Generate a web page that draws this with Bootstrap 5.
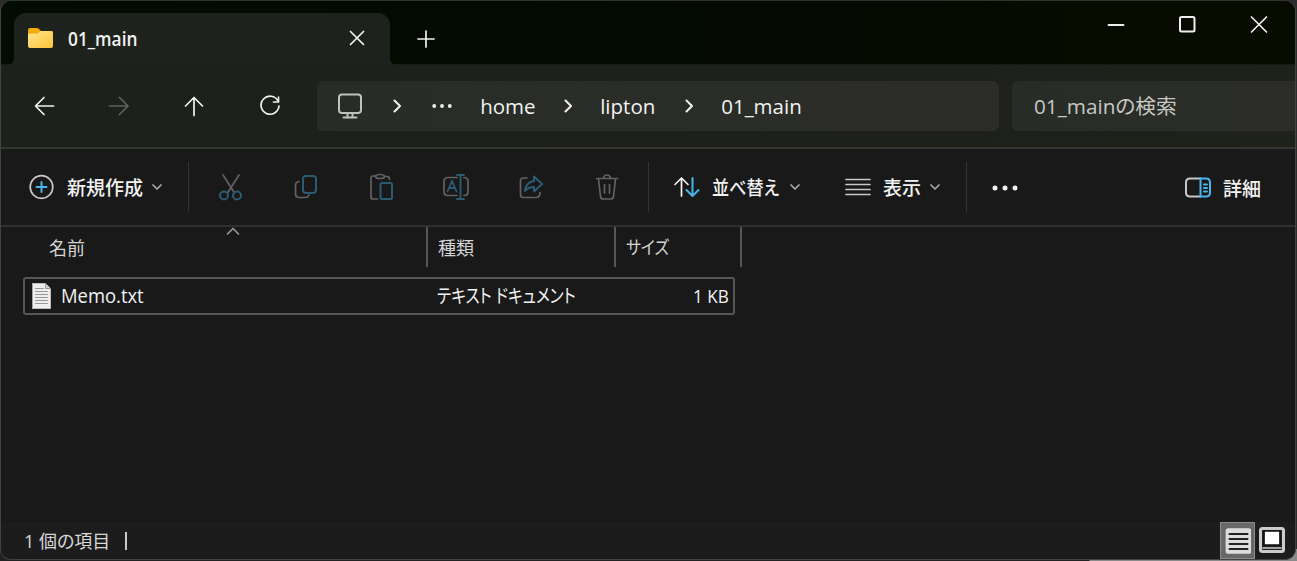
<!DOCTYPE html>
<html lang="ja" data-bs-theme="dark">
<head>
<meta charset="utf-8">
<title>01_main</title>
<link href="https://cdn.jsdelivr.net/npm/bootstrap@5.3.0/dist/css/bootstrap.min.css" rel="stylesheet">
<style>
html,body{height:100%}
body{background:linear-gradient(90deg,#222 0 1089px,#8a8a8a 1090px) bottom/100% 12px no-repeat,#2b2b2b;overflow:hidden;font:19px/1 "Open Sans","Noto Sans CJK JP",sans-serif;color:#f2f2f2}
svg{display:block;fill:none;stroke:currentColor;stroke-width:1.7;stroke-linecap:round;stroke-linejoin:round;flex:none}
.win{width:1296px;height:560px;border:1px solid #414341;border-top-color:#30332f;border-radius:11px;background:#191919;overflow:hidden;white-space:nowrap}
.titlebar{height:63px;background:linear-gradient(90deg,#020c02,#040b00 50%,#080b00)}
.filetab{width:376px;height:52px;margin:12px 0 0 13px;background:#1e221c;border-radius:12px 12px 0 0;padding:0 25px 2px 13px}
.filetab::before,.filetab::after{content:"";position:absolute;bottom:0;width:6px;height:6px}
.filetab::before{left:-6px;background:radial-gradient(circle at 0 0,transparent 5.5px,#1e221c 6px)}
.filetab::after{right:-6px;background:radial-gradient(circle at 100% 0,transparent 5.5px,#1e221c 6px)}
.caption-btns{padding:11px 24px 0 0;gap:48px;color:#eee}
.navrow{height:85px;background:linear-gradient(90deg,#1c211b,#1f211b);border-top:1px solid #141c13;border-bottom:2px solid #343634;padding-left:5px;font-size:20.5px}
.navcell{width:75.3px;display:grid;place-items:center;flex:none}
.address,.search{height:50px;background:linear-gradient(90deg,#282c27,#2c2d28);border-radius:6px;flex:none}
.address{width:682px;margin-left:10px;display:grid;grid-template-columns:65px 30px 60px 75px 42px 79px 42px 1fr;align-items:center}
.search{width:300px;margin-left:13px;padding-left:22px;color:#c6c8c5}
.cmd{height:78px;border-bottom:2px solid #303030;font-family:"Noto Sans CJK JP",sans-serif;font-weight:500}
.sep{width:1px;height:50px;background:#343434;flex:none}
.toolcell{width:75.2px;display:grid;place-items:center;color:#626262}
.b{stroke:#2c5a73}.blue{stroke:#49b5eb}
.tx{display:inline-block;transform-origin:0 50%;line-height:28px}
.cols{display:grid;grid-template-columns:427px 188px 126px 1fr;height:40px;color:#d4d4d4;font-family:"Noto Sans CJK JP",sans-serif;font-size:18px}
.cols>div{border-right:2px solid #565656;position:relative}
.cols>div:last-child{border:0}
.filerow{width:712px;height:38px;margin:10px 0 0 22px;border:2px solid #565656;border-radius:3px;display:grid;grid-template-columns:36px 376px 1fr 62px;align-items:center}
.status{height:37px;background:#1c1c1c;color:#d8d8d8;font-size:18px}
.viewsel{width:35px;height:37px;background:#686868;border:1px solid #8b8b8b;display:grid;place-items:center}
.k{font-feature-settings:"palt"}
#t-tab{transform:translateY(1px) scaleX(.91)}
#t-sort{transform:scaleX(.9)}
#t-search{transform:scaleX(1.01)}
#c3{transform:scaleX(.88)}
#r1{transform:scaleX(.945);font-size:19.5px}
#r2{transform:scaleX(.825)}
#r3{transform:scaleX(.9)}
</style>
</head>
<body>
<main class="win d-flex flex-column">
<header class="titlebar d-flex">
 <div class="filetab position-relative d-flex align-items-center">
  <svg width="27" height="24" viewBox="0 0 27 24" style="stroke:none"><defs><linearGradient id="fg" x2="1" y2="1"><stop stop-color="#ffe394"/><stop offset="1" stop-color="#ffc533"/></linearGradient></defs><path d="M1 4Q1 2 3 2h7q1 0 2 1l2 2h10q2 0 2 2v8H1z" fill="#f5ab05"/><path d="M1 9q0-1.500 1.500-1.500h8L13.500 5H24.500Q26 5 26 7v13q0 2-2 2H3q-2 0-2-2z" fill="url(#fg)"/></svg>
  <span class="tx fw-semibold" id="t-tab" style="margin-left:14px">01_main</span>
  <svg class="ms-auto" width="16" height="16" viewBox="0 0 16 16"><path d="M1.500 1.500l13 13M14.500 1.500l-13 13"/></svg>
 </div>
 <svg width="18" height="18" viewBox="0 0 18 18" style="margin:29px 0 0 27px"><path d="M9 1v16M1 9h16"/></svg>
 <div class="caption-btns ms-auto d-flex">
  <svg width="24" height="24" viewBox="0 0 24 24"><path d="M5.500 13h15" stroke-width="2"/></svg>
  <svg width="24" height="24" viewBox="0 0 24 24"><rect x="5" y="5" width="14.500" height="14.500" rx="1.500" stroke-width="2"/></svg>
  <svg width="24" height="24" viewBox="0 0 24 24"><path d="M4.500 5l15 15M19.500 5l-15 15"/></svg>
 </div>
</header>
<nav class="navrow d-flex align-items-center">
 <div class="navcell"><svg width="22" height="22" viewBox="0 0 22 22"><path d="M20.500 11H3M11 2.500L2.500 11l8.500 8.500"/></svg></div>
 <div class="navcell" style="color:#5d615c"><svg width="22" height="22" viewBox="0 0 22 22"><path d="M1.500 11H20M11.500 2.500L20 11l-8.500 8.500"/></svg></div>
 <div class="navcell"><svg width="22" height="22" viewBox="0 0 22 22"><path d="M11 20.500V2.500M2.500 11L11 2.500l8.500 8.500"/></svg></div>
 <div class="navcell"><svg width="22" height="22" viewBox="0 0 22 22"><path d="M19 6A9 9 0 1 0 20 11M19.500 2v5h-5"/></svg></div>
 <div class="address">
  <svg class="mx-auto" width="26" height="26" viewBox="0 0 26 26" style="color:#bfc2be"><rect x="2" y="1.500" width="22" height="18.500" rx="3" stroke-width="2"/><path d="M10.500 21v3M15.500 21v3M6.500 24.500h13" stroke-width="2"/></svg>
  <svg class="mx-auto" width="8" height="14" viewBox="0 0 8 14"><path d="M1.500 1.500L7 7l-5.500 5.500" stroke-width="2"/></svg>
  <svg class="mx-auto" width="20" height="5" viewBox="0 0 20 5" style="fill:currentColor;stroke:none"><circle cx="2.200" cy="2" r="1.900"/><circle cx="10" cy="2" r="1.900"/><circle cx="17.800" cy="2" r="1.900"/></svg>
  <span><span class="tx" id="t-home" style="margin-left:8px">home</span></span>
  <svg class="mx-auto" width="8" height="14" viewBox="0 0 8 14"><path d="M1.500 1.500L7 7l-5.500 5.500" stroke-width="2"/></svg>
  <span><span class="tx" id="t-lip" style="margin-left:11px">lipton</span></span>
  <svg class="mx-auto" width="8" height="14" viewBox="0 0 8 14"><path d="M1.500 1.500L7 7l-5.500 5.500" stroke-width="2"/></svg>
  <span><span class="tx" id="t-main" style="margin-left:11px">01_main</span></span>
 </div>
 <div class="search d-flex align-items-center"><span class="tx k" id="t-search">01_mainの検索</span></div>
</nav>
<section class="cmd d-flex align-items-center">
 <div class="d-flex align-items-center" style="width:187px;padding-left:27px">
  <svg width="26" height="26" viewBox="0 0 26 26"><circle cx="13.500" cy="13" r="11.300" stroke="#c8c8c8"/><path class="blue" d="M13.500 8v10M8.500 13h10" stroke-width="2"/></svg>
  <span class="tx" id="t-new" style="margin-left:13px">新規作成</span>
  <svg width="10" height="7" viewBox="0 0 10 7" style="margin-left:9px;color:#aaa"><path d="M1 1l4 4 4-4"/></svg>
 </div>
 <div class="sep"></div>
 <div class="d-flex" style="width:459px;padding-left:4px">
  <div class="toolcell"><svg width="26" height="28" viewBox="0 0 26 28"><path d="M5 2l11.500 18M21 2L9.500 20"/><circle class="b" cx="6" cy="22.500" r="4" stroke-width="2"/><circle class="b" cx="19" cy="22.500" r="4" stroke-width="2"/></svg></div>
  <div class="toolcell"><svg width="26" height="26" viewBox="0 0 26 26"><path d="M6 7.500Q2.500 8 2.500 11v8.500q0 4 4 4h6q2.500 0 3.500-2.500"/><rect class="b" x="10" y="2" width="13" height="17" rx="3" stroke-width="2"/></svg></div>
  <div class="toolcell"><svg width="26" height="28" viewBox="0 0 26 28"><path d="M9.500 26H5q-2 0-2-2V5q0-2 2-2h2.500M16.500 3.500h3q2 0 2 3"/><ellipse cx="12" cy="3.500" rx="4.500" ry="2"/><rect class="b" x="12.500" y="10" width="11.500" height="16" rx="1.500" stroke-width="2"/></svg></div>
  <div class="toolcell"><svg width="28" height="28" viewBox="0 0 28 28"><path d="M15 4.500H6Q2 4.500 2 8.500v10q0 4 4 4h9M22 4.500q4 0 4 4v10q0 4-4 4"/><path class="b" d="M5.500 18.500L10 8l4.500 10.500M7 15h6M18.500 2v24M15 2h7M15 26h7" stroke-width="1.900"/></svg></div>
  <div class="toolcell"><svg width="26" height="26" viewBox="0 0 26 26"><path d="M9 4H5.500Q2.500 4 2.500 7v13.500q0 3 3 3H18q4 0 4-5"/><path class="b" d="M16 2.500l8 7.500-8 7.500V13q-6 0-9 4 1-9 9-10z" stroke-width="2"/></svg></div>
  <div class="toolcell"><svg width="26" height="28" viewBox="0 0 26 28"><path d="M2.500 5.500h21M9.500 5Q10 2 13 2t3.500 3M4.500 6l2 17.500Q7 26 9 26h8q2 0 2.500-2.500l2-17.500M10.500 11.500v8.500M15.500 11.500v8.500"/></svg></div>
 </div>
 <div class="sep"></div>
 <div class="d-flex align-items-center" style="width:317px;padding-left:24px">
  <svg width="28" height="24" viewBox="0 0 28 24"><path d="M8.500 21V3M2 9.500L8.500 3l6.500 6.500"/><path class="blue" d="M19.500 3v18M13.500 15l6 6 6-6" stroke-width="2"/></svg>
  <span style="width:71px;margin-left:11px"><span class="tx k" id="t-sort">並べ替え</span></span>
  <svg width="10" height="7" viewBox="0 0 10 7" style="margin-left:7px;color:#aaa"><path d="M1 1l4 4 4-4"/></svg>
  <svg width="26" height="20" viewBox="0 0 26 20" style="margin-left:45px;color:#c8c8c8"><path d="M1 2.500h24M1 7.500h24M1 12.500h24M1 17.500h24"/></svg>
  <span class="tx" id="t-view" style="margin-left:12px">表示</span>
  <svg width="10" height="7" viewBox="0 0 10 7" style="margin-left:9px;color:#aaa"><path d="M1 1l4 4 4-4"/></svg>
 </div>
 <div class="sep"></div>
 <svg width="28" height="8" viewBox="0 0 28 8" style="margin:2px 0 0 24px;fill:currentColor;stroke:none"><circle cx="4" cy="4" r="2.500"/><circle cx="14" cy="4" r="2.500"/><circle cx="24" cy="4" r="2.500"/></svg>
 <svg class="ms-auto" width="26" height="21" viewBox="0 0 26 21"><path d="M15.500 1.500H5Q1 1.500 1 5.500v10q0 4 4 4h10.500" stroke="#c8c8c8" stroke-width="2"/><path class="blue" d="M15.500 1.500H21q4 0 4 4v10q0 4-4 4h-5.500zM19 7.500h3M19 11h3M19 14.500h3" stroke-width="2"/></svg>
 <span class="tx" id="t-det" style="margin:1px 34px 0 12px">詳細</span>
</section>
<section class="flex-grow-1">
 <div class="cols">
  <div style="padding:6px 0 0 48px"><span class="tx" id="c1">名前</span><svg class="position-absolute" width="14" height="9" viewBox="0 0 14 9" style="left:225px;top:0;color:#999"><path d="M1.500 7L7 1.500 12.500 7"/></svg></div>
  <div style="padding:6px 0 0 10px"><span class="tx" id="c2">種類</span></div>
  <div style="padding:5px 0 0 10px"><span class="tx k" id="c3">サイズ</span></div><div></div>
 </div>
 <div class="filerow">
  <svg width="20" height="26" viewBox="0 0 20 26" style="margin-left:7px;stroke-width:1"><path d="M.500.500h13l5 5v20H.500z" fill="#eee" stroke="#bbb"/><path d="M13.500.500v5h5" fill="#ccc" stroke="#999"/><path d="M3.500 5.500h8M3.500 8.500h12M3.500 11.500h12M3.500 14.500h12M3.500 17.500h12M3.500 20.500h12" stroke="#999"/></svg>
  <span><span class="tx" id="r1">Memo.txt</span></span>
  <span><span class="tx k" id="r2">テキスト ドキュメント</span></span>
  <span class="text-end" style="padding-right:4px"><span class="tx" id="r3" style="transform-origin:100% 50%">1 KB</span></span>
 </div>
</section>
<footer class="status d-flex align-items-center">
 <span class="tx k" id="s1" style="margin-left:23px;width:86px">1 個の項目</span>
 <span style="width:2px;height:18px;margin-left:15px;background:#c8c8c8"></span>
 <div class="viewsel ms-auto"><svg width="26" height="26" viewBox="0 0 26 26"><rect x="1.500" y="1" width="24" height="24" rx="2" fill="#ddd" stroke="#ddd"/><path d="M4.500 6h18M4.500 11h18M4.500 16h18M4.500 21h18" stroke="#222" stroke-width="2"/></svg></div>
 <svg width="26" height="26" viewBox="0 0 26 26" style="margin:2px 10px 3px 4px"><rect x="1.500" y="1.500" width="23" height="23" rx="2" stroke="#ccc" stroke-width="3" fill="#222"/><rect x="5" y="4" width="16" height="14" fill="#fff" stroke="#111"/><path d="M4 21h18" stroke="#ccc"/></svg>
</footer>
</main>
<script src="https://cdn.jsdelivr.net/npm/bootstrap@5.3.0/dist/js/bootstrap.bundle.min.js"></script>
</body>
</html>
